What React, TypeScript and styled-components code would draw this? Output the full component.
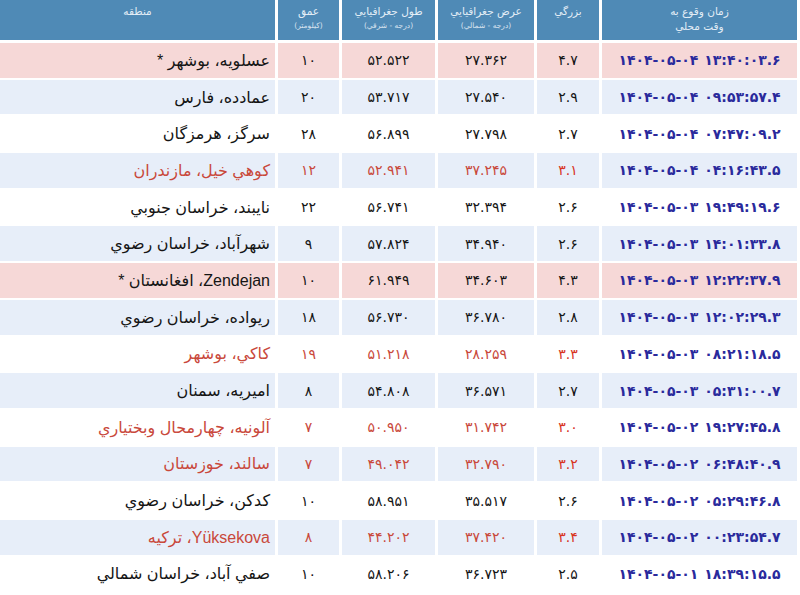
import styled, { createGlobalStyle } from 'styled-components';

type Tone = 'normal' | 'alert' | 'strong';

type Quake = {
  time: string;
  mag: string;
  lat: string;
  lon: string;
  depth: string;
  region: string;
  tone: Tone;
};

const COLUMNS = '195px 62px 96px 93px 61px 1fr';

const palette = {
  header: '#4f8ab6',
  headerText: '#e4eef6',
  blueRow: '#e7eef9',
  pinkRow: '#f6d8d7',
  white: '#ffffff',
  text: '#151515',
  red: '#c9483b',
  redStrong: '#d8341f',
  time: '#2a2a9c',
};

const quakes: Quake[] = [
  { time: '۱۴۰۴-۰۵-۰۴ ۱۳:۴۰:۰۳.۶', mag: '۴.۷', lat: '۲۷.۳۶۲', lon: '۵۲.۵۲۲', depth: '۱۰', region: 'عسلويه، بوشهر *', tone: 'strong' },
  { time: '۱۴۰۴-۰۵-۰۴ ۰۹:۵۳:۵۷.۴', mag: '۲.۹', lat: '۲۷.۵۴۰', lon: '۵۳.۷۱۷', depth: '۲۰', region: 'عمادده، فارس', tone: 'normal' },
  { time: '۱۴۰۴-۰۵-۰۴ ۰۷:۴۷:۰۹.۲', mag: '۲.۷', lat: '۲۷.۷۹۸', lon: '۵۶.۸۹۹', depth: '۲۸', region: 'سرگز، هرمزگان', tone: 'normal' },
  { time: '۱۴۰۴-۰۵-۰۴ ۰۴:۱۶:۴۳.۵', mag: '۳.۱', lat: '۳۷.۲۴۵', lon: '۵۲.۹۴۱', depth: '۱۲', region: 'كوهي خيل، مازندران', tone: 'alert' },
  { time: '۱۴۰۴-۰۵-۰۳ ۱۹:۴۹:۱۹.۶', mag: '۲.۶', lat: '۳۲.۳۹۴', lon: '۵۶.۷۴۱', depth: '۲۲', region: 'نايبند، خراسان جنوبي', tone: 'normal' },
  { time: '۱۴۰۴-۰۵-۰۳ ۱۴:۰۱:۳۳.۸', mag: '۲.۶', lat: '۳۴.۹۴۰', lon: '۵۷.۸۲۴', depth: '۹', region: 'شهرآباد، خراسان رضوي', tone: 'normal' },
  { time: '۱۴۰۴-۰۵-۰۳ ۱۲:۲۲:۳۷.۹', mag: '۴.۳', lat: '۳۴.۶۰۳', lon: '۶۱.۹۴۹', depth: '۱۰', region: 'Zendejan، افغانستان *', tone: 'strong' },
  { time: '۱۴۰۴-۰۵-۰۳ ۱۲:۰۲:۲۹.۳', mag: '۲.۸', lat: '۳۶.۷۸۰', lon: '۵۶.۷۳۰', depth: '۱۸', region: 'ريواده، خراسان رضوي', tone: 'normal' },
  { time: '۱۴۰۴-۰۵-۰۳ ۰۸:۲۱:۱۸.۵', mag: '۳.۳', lat: '۲۸.۲۵۹', lon: '۵۱.۲۱۸', depth: '۱۹', region: 'كاكي، بوشهر', tone: 'alert' },
  { time: '۱۴۰۴-۰۵-۰۳ ۰۵:۳۱:۰۰.۷', mag: '۲.۷', lat: '۳۶.۵۷۱', lon: '۵۴.۸۰۸', depth: '۸', region: 'اميريه، سمنان', tone: 'normal' },
  { time: '۱۴۰۴-۰۵-۰۲ ۱۹:۲۷:۴۵.۸', mag: '۳.۰', lat: '۳۱.۷۴۲', lon: '۵۰.۹۵۰', depth: '۷', region: 'آلونيه، چهارمحال وبختياري', tone: 'alert' },
  { time: '۱۴۰۴-۰۵-۰۲ ۰۶:۴۸:۴۰.۹', mag: '۳.۲', lat: '۳۲.۷۹۰', lon: '۴۹.۰۴۲', depth: '۷', region: 'سالند، خوزستان', tone: 'alert' },
  { time: '۱۴۰۴-۰۵-۰۲ ۰۵:۲۹:۴۶.۸', mag: '۲.۶', lat: '۳۵.۵۱۷', lon: '۵۸.۹۵۱', depth: '۱۰', region: 'كدكن، خراسان رضوي', tone: 'normal' },
  { time: '۱۴۰۴-۰۵-۰۲ ۰۰:۲۳:۵۴.۷', mag: '۳.۴', lat: '۳۷.۴۲۰', lon: '۴۴.۲۰۲', depth: '۸', region: 'Yüksekova، تركيه', tone: 'alert' },
  { time: '۱۴۰۴-۰۵-۰۱ ۱۸:۳۹:۱۵.۵', mag: '۲.۵', lat: '۳۶.۷۲۳', lon: '۵۸.۲۰۶', depth: '۱۰', region: 'صفي آباد، خراسان شمالي', tone: 'normal' },
];

const GlobalStyle = createGlobalStyle`
  html, body {
    margin: 0;
    padding: 0;
    background: #ffffff;
  }
  body {
    font-family: "Liberation Sans", "DejaVu Sans", sans-serif;
  }
`;

const Table = styled.div`
  direction: rtl;
  width: 797px;
  display: flex;
  flex-direction: column;
  gap: 2px;
  overflow: hidden;
  height: 595px;
`;

const HeaderRow = styled.div`
  display: grid;
  grid-template-columns: ${COLUMNS};
  column-gap: 3px;
  height: 40px;
  margin-bottom: 1px;
`;

const HeaderCell = styled.div`
  background: ${palette.header};
  color: ${palette.headerText};
  font-family: "DejaVu Sans", sans-serif;
  font-size: 10.5px;
  line-height: 15px;
  text-align: center;
  padding-top: 4px;
  display: flex;
  flex-direction: column;
  align-items: center;
`;

const HeaderNote = styled.span`
  font-size: 7.5px;
  line-height: 14px;
  opacity: 0.9;
`;

const Row = styled.div`
  display: grid;
  grid-template-columns: ${COLUMNS};
  column-gap: 3px;
  height: 34.7px;
  flex-shrink: 0;
`;

const Cell = styled.div<{ $bg: string; $color: string }>`
  background: ${(p) => p.$bg};
  color: ${(p) => p.$color};
  display: flex;
  align-items: center;
  justify-content: center;
  font-family: "DejaVu Sans", sans-serif;
  font-size: 14px;
  letter-spacing: 1.8px;
`;

const TimeCell = styled(Cell)`
  direction: ltr;
  font-weight: bold;
  font-size: 14px;
  letter-spacing: 3.3px;
  word-spacing: 1px;
`;

const RegionCell = styled(Cell)`
  justify-content: flex-start;
  padding-right: 5px;
  font-family: "Liberation Sans", "DejaVu Sans", sans-serif;
  font-size: 16px;
  letter-spacing: 0;
`;

const rowBackground = (q: Quake, i: number) => {
  if (q.tone === 'strong') return palette.pinkRow;
  return i % 2 === 1 ? palette.blueRow : palette.white;
};

const QuakeRow = ({ q, index }: { q: Quake; index: number }) => {
  const bg = rowBackground(q, index);
  const color = q.tone === 'alert' ? palette.red : palette.text;
  const magColor = q.tone === 'alert' ? palette.redStrong : palette.text;
  return (
    <Row>
      <TimeCell $bg={bg} $color={palette.time}>{q.time}</TimeCell>
      <Cell $bg={bg} $color={magColor}>{q.mag}</Cell>
      <Cell $bg={bg} $color={color}>{q.lat}</Cell>
      <Cell $bg={bg} $color={color}>{q.lon}</Cell>
      <Cell $bg={bg} $color={color}>{q.depth}</Cell>
      <RegionCell $bg={bg} $color={color}>{q.region}</RegionCell>
    </Row>
  );
};

export default function App() {
  return (
    <>
      <GlobalStyle />
      <Table>
        <HeaderRow>
          <HeaderCell>
            <span>زمان وقوع به</span>
            <span>وقت محلي</span>
          </HeaderCell>
          <HeaderCell>بزرگي</HeaderCell>
          <HeaderCell>
            <span>عرض جغرافيايي</span>
            <HeaderNote>(درجه - شمالي)</HeaderNote>
          </HeaderCell>
          <HeaderCell>
            <span>طول جغرافيايي</span>
            <HeaderNote>(درجه - شرقي)</HeaderNote>
          </HeaderCell>
          <HeaderCell>
            <span>عمق</span>
            <HeaderNote>(كيلومتر)</HeaderNote>
          </HeaderCell>
          <HeaderCell>منطقه</HeaderCell>
        </HeaderRow>
        {quakes.map((q, i) => (
          <QuakeRow key={q.time} q={q} index={i} />
        ))}
      </Table>
    </>
  );
}
